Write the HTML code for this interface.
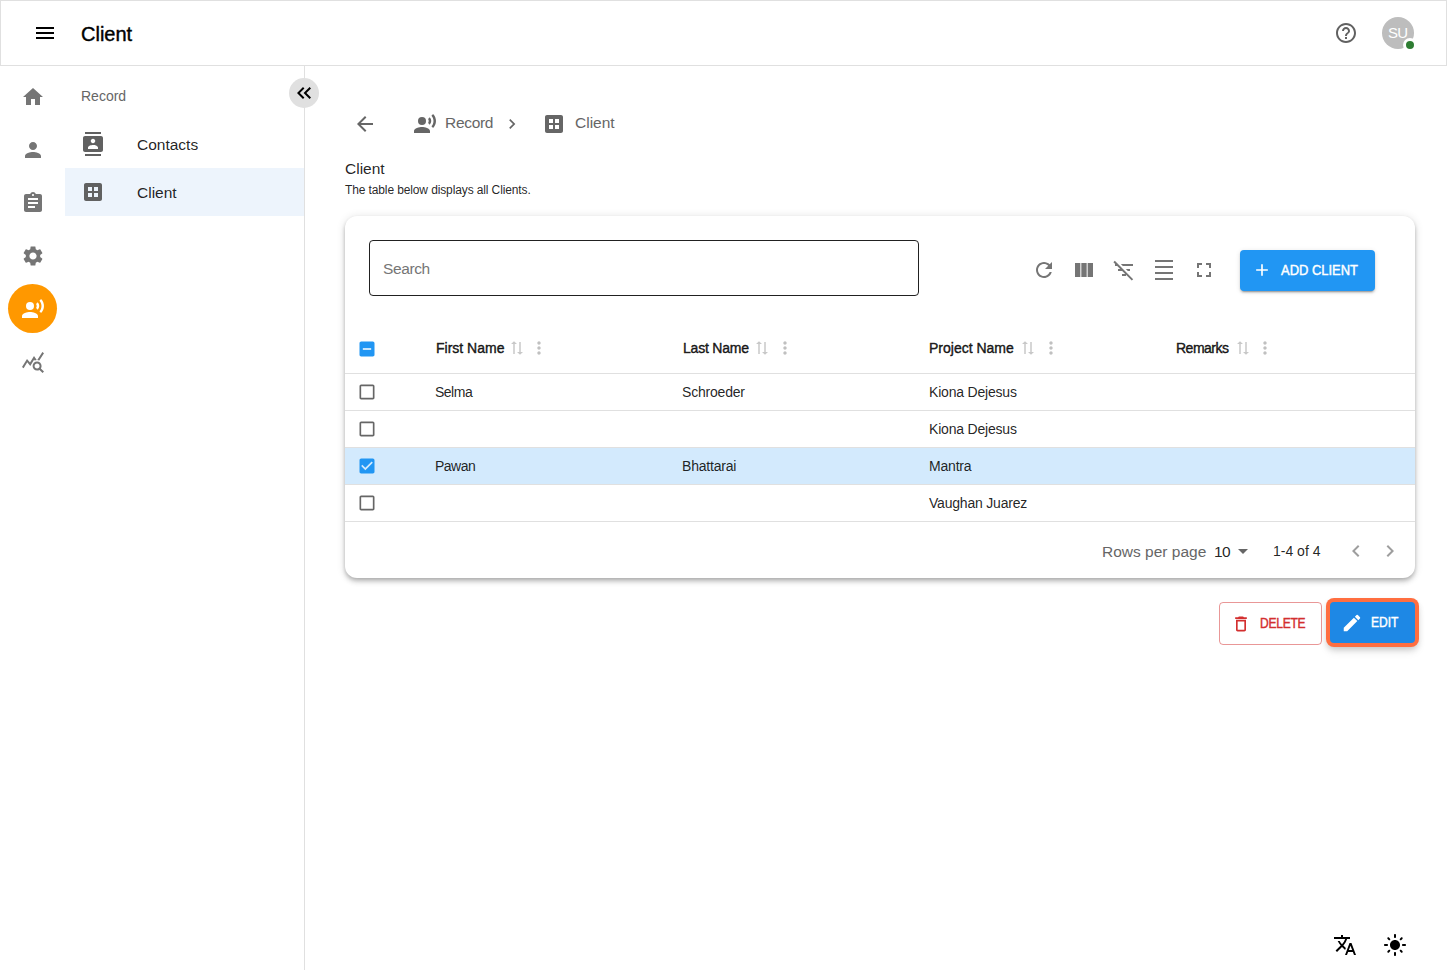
<!DOCTYPE html>
<html><head><meta charset="utf-8"><title>Client</title>
<style>
*{box-sizing:border-box;margin:0;padding:0}
html,body{width:1447px;height:970px;overflow:hidden;background:#fff;font-family:"Liberation Sans",sans-serif;color:rgba(0,0,0,0.87)}
.a{position:absolute}
.t{position:absolute;white-space:nowrap;line-height:1}
.sb{font-weight:400 !important;-webkit-text-stroke:0.45px currentColor}
svg.i{position:absolute;width:24px;height:24px;fill:currentColor}
</style></head><body>

<!-- HEADER -->
<div class="a" style="left:0;top:0;width:1447px;height:66px;border:1px solid #e0e0e0"></div>
<svg class="i" viewBox="0 0 24 24" style="left:33px;top:21px;color:#000"><path d="M3 18h18v-2H3zm0-5h18v-2H3zm0-7v2h18V6z"/></svg>
<div class="t sb" style="left:81px;top:24px;font-size:20px;color:#000;-webkit-text-stroke:0.4px #000;letter-spacing:0px">Client</div>
<svg class="i" viewBox="0 0 24 24" style="left:1334px;top:21px;color:#616161"><path d="M11 18h2v-2h-2zm1-16C6.48 2 2 6.48 2 12s4.48 10 10 10 10-4.48 10-10S17.52 2 12 2m0 18c-4.41 0-8-3.59-8-8s3.59-8 8-8 8 3.59 8 8-3.59 8-8 8m0-14c-2.21 0-4 1.790-4 4h2c0-1.1.9-2 2-2s2 .9 2 2c0 2-3 1.75-3 5h2c0-2.25 3-2.5 3-5 0-2.21-1.79-4-4-4"/></svg>
<div class="a" style="left:1382px;top:17px;width:32px;height:32px;border-radius:50%;background:#bdbdbd"></div>
<div class="t" style="left:1388px;top:25px;font-size:15px;color:#fff;letter-spacing:-0.8px">SU</div>
<div class="a" style="left:1403px;top:38px;width:14px;height:14px;border-radius:50%;background:#2e7d32;border:3px solid #fff"></div>

<!-- ICON RAIL -->
<svg class="i" viewBox="0 0 24 24" style="left:21px;top:85px;color:#757575"><path d="M10 20v-6h4v6h5v-8h3L12 3 2 12h3v8z"/></svg>
<svg class="i" viewBox="0 0 24 24" style="left:21px;top:138px;color:#757575"><path d="M12 12c2.21 0 4-1.79 4-4s-1.79-4-4-4-4 1.79-4 4 1.79 4 4 4m0 2c-2.67 0-8 1.34-8 4v2h16v-2c0-2.66-5.33-4-8-4"/></svg>
<svg class="i" viewBox="0 0 24 24" style="left:21px;top:191px;color:#757575"><path d="M19 3h-4.18C14.4 1.840 13.3 1 12 1c-1.3 0-2.4.84-2.82 2H5c-1.1 0-2 .9-2 2v14c0 1.1.9 2 2 2h14c1.1 0 2-.9 2-2V5c0-1.1-.9-2-2-2m-7 0c.55 0 1 .45 1 1s-.45 1-1 1-1-.45-1-1 .45-1 1-1m2 14H7v-2h7zm3-4H7v-2h10zm0-4H7V7h10z"/></svg>
<svg class="i" viewBox="0 0 24 24" style="left:21px;top:244px;color:#757575"><path d="M19.14 12.94c.04-.3.06-.61.06-.94 0-.32-.02-.64-.07-.94l2.03-1.58c.18-.14.23-.41.12-.61l-1.92-3.32c-.12-.22-.37-.29-.59-.22l-2.39.96c-.5-.38-1.03-.7-1.62-.94l-.36-2.54c-.04-.24-.24-.41-.48-.41h-3.84c-.24 0-.43.17-.47.41l-.36 2.54c-.59.24-1.13.57-1.62.94l-2.39-.96c-.22-.08-.47 0-.59.22L2.740 8.87c-.12.21-.08.47.12.61l2.03 1.58c-.05.3-.09.63-.09.94s.02.64.07.94l-2.03 1.58c-.18.14-.23.41-.12.61l1.92 3.32c.12.22.37.29.59.22l2.39-.96c.5.38 1.03.7 1.62.94l.36 2.54c.05.24.24.41.48.41h3.84c.24 0 .44-.17.47-.41l.36-2.54c.59-.24 1.13-.56 1.62-.94l2.39.96c.22.08.47 0 .59-.22l1.92-3.32c.12-.22.07-.47-.12-.61zM12 15.6c-1.98 0-3.6-1.62-3.6-3.6s1.62-3.6 3.6-3.6 3.6 1.62 3.6 3.6-1.62 3.6-3.6 3.6"/></svg>
<div class="a" style="left:8px;top:284px;width:49px;height:49px;border-radius:50%;background:#ff9800"></div>
<svg class="i" viewBox="0 0 24 24" style="left:21px;top:297px;color:#fff"><circle cx="9" cy="9" r="4"/><path d="M9 15c-2.67 0-8 1.34-8 4v2h16v-2c0-2.66-5.33-4-8-4m7.76-9.64-1.68 1.69c.84 1.18.84 2.71 0 3.89l1.68 1.69c2.02-2.02 2.02-5.07 0-7.27M20.07 2l-1.63 1.63c2.77 3.02 2.77 7.56 0 10.74L20.07 16c3.9-3.89 3.91-9.95 0-14"/></svg>
<svg class="i" viewBox="0 0 24 24" style="left:21px;top:350px;color:#757575"><path d="M19.88 18.47c.44-.7.7-1.51.7-2.39 0-2.49-2.01-4.5-4.5-4.5s-4.5 2.01-4.5 4.5 2.01 4.5 4.49 4.5c.88 0 1.7-.26 2.39-.7L21.58 23 23 21.58zm-3.8.11c-1.38 0-2.5-1.12-2.5-2.5s1.12-2.5 2.5-2.5 2.5 1.12 2.5 2.5-1.12 2.5-2.5 2.5m-.36-8.5c-.74.02-1.45.18-2.1.45l-.55-.83-3.8 6.18-3.01-3.52-3.63 5.81L1 17l5-8 3 3.5L13 6zm2.59.5c-.64-.28-1.33-.45-2.05-.49L21.38 2 23 3.18z"/></svg>

<!-- SIDEBAR PANEL -->
<div class="a" style="left:304px;top:66px;width:1px;height:904px;background:#e0e0e0"></div>
<div class="t" style="left:81px;top:89px;font-size:14px;color:#666">Record</div>
<div class="a" style="left:289px;top:78px;width:30px;height:30px;border-radius:50%;background:#e0e0e0"></div>
<svg class="i" viewBox="0 0 24 24" style="left:292px;top:81px;color:#000"><path d="M17.59 18 19 16.59 14.42 12 19 7.41 17.59 6l-6 6z"/><path d="M11 18l1.41-1.41L7.83 12l4.58-4.59L11 6l-6 6z"/></svg>
<svg class="i" viewBox="0 0 24 24" style="left:81px;top:132px;color:#616161"><path d="M20 0H4v2h16zM4 24h16v-2H4zM20 4H4c-1.1 0-2 .9-2 2v12c0 1.1.9 2 2 2h16c1.1 0 2-.9 2-2V6c0-1.1-.9-2-2-2m-8 2.75c1.24 0 2.25 1.01 2.25 2.25s-1.01 2.25-2.25 2.25S9.75 10.24 9.75 9 10.76 6.75 12 6.75M17 17H7v-1.5c0-1.67 3.33-2.5 5-2.5s5 .83 5 2.5z"/></svg>
<div class="t" style="left:137px;top:137px;font-size:15.5px;color:rgba(0,0,0,0.87)">Contacts</div>
<div class="a" style="left:65px;top:168px;width:239px;height:48px;background:#edf4fc"></div>
<svg class="i" viewBox="0 0 24 24" style="left:81px;top:180px;color:#616161"><path d="M19 3H5c-1.1 0-2 .9-2 2v14c0 1.1.9 2 2 2h14c1.1 0 2-.9 2-2V5c0-1.1-.9-2-2-2m-8 14H7v-4h4zm0-6H7V7h4zm6 6h-4v-4h4zm0-6h-4V7h4z"/></svg>
<div class="t" style="left:137px;top:185px;font-size:15.5px;color:rgba(0,0,0,0.87)">Client</div>

<!-- BREADCRUMB -->
<svg class="i" viewBox="0 0 24 24" style="left:353px;top:112px;color:#666"><path d="M20 11H7.83l5.59-5.59L12 4l-8 8 8 8 1.41-1.41L7.83 13H20z"/></svg>
<svg class="i" viewBox="0 0 24 24" style="left:413px;top:112px;color:#666"><circle cx="9" cy="9" r="4"/><path d="M9 15c-2.67 0-8 1.34-8 4v2h16v-2c0-2.66-5.33-4-8-4m7.76-9.64-1.68 1.69c.84 1.18.84 2.71 0 3.89l1.68 1.69c2.02-2.02 2.02-5.07 0-7.27M20.07 2l-1.63 1.63c2.77 3.02 2.77 7.56 0 10.74L20.07 16c3.9-3.89 3.91-9.95 0-14"/></svg>
<div class="t" style="left:445px;top:115px;font-size:15.5px;color:#666;letter-spacing:-0.3px">Record</div>
<svg class="i" viewBox="0 0 24 24" style="left:502px;top:114px;width:20px;height:20px;color:#666"><path d="M10 6 8.59 7.41 13.17 12l-4.58 4.59L10 18l6-6z"/></svg>
<svg class="i" viewBox="0 0 24 24" style="left:542px;top:112px;color:#666"><path d="M19 3H5c-1.1 0-2 .9-2 2v14c0 1.1.9 2 2 2h14c1.1 0 2-.9 2-2V5c0-1.1-.9-2-2-2m-8 14H7v-4h4zm0-6H7V7h4zm6 6h-4v-4h4zm0-6h-4V7h4z"/></svg>
<div class="t" style="left:575px;top:115px;font-size:15.5px;color:#666">Client</div>

<div class="t" style="left:345px;top:161px;font-size:15.5px;color:rgba(0,0,0,0.87)">Client</div>
<div class="t" style="left:345px;top:184px;font-size:12px;color:rgba(0,0,0,0.87);letter-spacing:-0.12px">The table below displays all Clients.</div>

<!-- CARD -->
<div class="a" style="left:345px;top:216px;width:1070px;height:362px;border-radius:12px;background:#fff;box-shadow:0 2px 4px -1px rgba(0,0,0,0.2),0 4px 5px 0 rgba(0,0,0,0.14),0 1px 10px 0 rgba(0,0,0,0.12)"></div>


<!-- SEARCH -->
<div class="a" style="left:369px;top:240px;width:550px;height:56px;border:1px solid rgba(0,0,0,0.87);border-radius:4px"></div>
<div class="t" style="left:383px;top:261px;font-size:15.5px;color:#757575;letter-spacing:-0.4px">Search</div>

<!-- TOOLBAR -->
<svg class="i" viewBox="0 0 24 24" style="left:1032px;top:258px;color:#757575"><path d="M17.65 6.35C16.2 4.9 14.21 4 12 4c-4.42 0-7.99 3.58-7.99 8s3.57 8 7.99 8c3.73 0 6.84-2.55 7.73-6h-2.08c-.82 2.33-3.04 4-5.65 4-3.31 0-6-2.69-6-6s2.690-6 6-6c1.66 0 3.14.69 4.22 1.78L13 11h7V4z"/></svg>
<svg class="i" viewBox="0 0 24 24" style="left:1072px;top:258px;color:#757575"><path d="M14.67 5v14H9.33V5zm1 14H21V5h-5.33zm-7.34 0V5H3v14z"/></svg>
<svg class="i" viewBox="0 0 24 24" style="left:1112px;top:258px;color:#757575"><path d="M10.83 8H21V6H8.83l2 2zm5 5H18v-2h-4.17l2 2zM14 16.83V18h-4v-2h3.17l-3-3H6v-2h2.17l-3-3H3V6h.17L1.39 4.22 2.8 2.81l18.38 18.38-1.41 1.41L14 16.83z"/></svg>
<svg class="i" viewBox="0 0 24 24" style="left:1152px;top:258px;color:#757575"><path d="M3 2h18v2H3zm0 18h18v2H3zm0-6h18v2H3zm0-6h18v2H3z"/></svg>
<svg class="i" viewBox="0 0 24 24" style="left:1192px;top:258px;color:#757575"><path d="M7 14H5v5h5v-2H7zm-2-4h2V7h3V5H5zm12 7h-3v2h5v-5h-2zM14 5v2h3v3h2V5z"/></svg>
<div class="a" style="left:1240px;top:250px;width:135px;height:41px;border-radius:4px;background:#2196f3;box-shadow:0 3px 1px -2px rgba(0,0,0,0.2),0 2px 2px 0 rgba(0,0,0,0.14),0 1px 5px 0 rgba(0,0,0,0.12)"></div>
<svg class="i" viewBox="0 0 24 24" style="left:1252px;top:260px;width:20px;height:20px;color:#fff"><path d="M19 13h-6v6h-2v-6H5v-2h6V5h2v6h6z"/></svg>
<div class="t sb" style="left:1281px;top:263px;font-size:14px;color:#fff;letter-spacing:0px;transform:scaleX(0.925);transform-origin:0 0">ADD CLIENT</div>

<!-- TABLE HEADER -->
<svg class="i" viewBox="0 0 24 24" style="left:357px;top:339px;width:20px;height:20px;color:#2196f3"><path d="M19 3H5c-1.1 0-2 .9-2 2v14c0 1.1.9 2 2 2h14c1.1 0 2-.9 2-2V5c0-1.1-.9-2-2-2m-2 10H7v-2h10z"/></svg>
<div class="t sb" style="left:436px;top:341px;font-size:14px;font-weight:700;color:rgba(0,0,0,0.87);letter-spacing:0px">First Name</div>
<svg class="i sort" viewBox="0 0 24 24" style="left:508px;top:339px;width:18px;height:18px;color:#c8c8c8;transform:rotate(-90deg) scaleX(0.9)"><path d="m18 12 4-4-4-4v3H3v2h15zM6 12l-4 4 4 4v-3h15v-2H6z"/></svg>
<svg class="i" viewBox="0 0 24 24" style="left:529px;top:338px;width:20px;height:20px;color:#c0c0c0"><path d="M12 8c1.1 0 2-.9 2-2s-.9-2-2-2-2 .9-2 2 .9 2 2 2m0 2c-1.1 0-2 .9-2 2s.9 2 2 2 2-.9 2-2-.9-2-2-2m0 6c-1.1 0-2 .9-2 2s.9 2 2 2 2-.9 2-2-.9-2-2-2"/></svg>
<div class="t sb" style="left:683px;top:341px;font-size:14px;font-weight:700;color:rgba(0,0,0,0.87);letter-spacing:-0.2px">Last Name</div>
<svg class="i sort" viewBox="0 0 24 24" style="left:753px;top:339px;width:18px;height:18px;color:#c8c8c8;transform:rotate(-90deg) scaleX(0.9)"><path d="m18 12 4-4-4-4v3H3v2h15zM6 12l-4 4 4 4v-3h15v-2H6z"/></svg>
<svg class="i" viewBox="0 0 24 24" style="left:775px;top:338px;width:20px;height:20px;color:#c0c0c0"><path d="M12 8c1.1 0 2-.9 2-2s-.9-2-2-2-2 .9-2 2 .9 2 2 2m0 2c-1.1 0-2 .9-2 2s.9 2 2 2 2-.9 2-2-.9-2-2-2m0 6c-1.1 0-2 .9-2 2s.9 2 2 2 2-.9 2-2-.9-2-2-2"/></svg>
<div class="t sb" style="left:929px;top:341px;font-size:14px;font-weight:700;color:rgba(0,0,0,0.87);letter-spacing:0px">Project Name</div>
<svg class="i sort" viewBox="0 0 24 24" style="left:1019px;top:339px;width:18px;height:18px;color:#c8c8c8;transform:rotate(-90deg) scaleX(0.9)"><path d="m18 12 4-4-4-4v3H3v2h15zM6 12l-4 4 4 4v-3h15v-2H6z"/></svg>
<svg class="i" viewBox="0 0 24 24" style="left:1041px;top:338px;width:20px;height:20px;color:#c0c0c0"><path d="M12 8c1.1 0 2-.9 2-2s-.9-2-2-2-2 .9-2 2 .9 2 2 2m0 2c-1.1 0-2 .9-2 2s.9 2 2 2 2-.9 2-2-.9-2-2-2m0 6c-1.1 0-2 .9-2 2s.9 2 2 2 2-.9 2-2-.9-2-2-2"/></svg>
<div class="t sb" style="left:1176px;top:341px;font-size:14px;font-weight:700;color:rgba(0,0,0,0.87);letter-spacing:-0.5px">Remarks</div>
<svg class="i sort" viewBox="0 0 24 24" style="left:1234px;top:339px;width:18px;height:18px;color:#c8c8c8;transform:rotate(-90deg) scaleX(0.9)"><path d="m18 12 4-4-4-4v3H3v2h15zM6 12l-4 4 4 4v-3h15v-2H6z"/></svg>
<svg class="i" viewBox="0 0 24 24" style="left:1255px;top:338px;width:20px;height:20px;color:#c0c0c0"><path d="M12 8c1.1 0 2-.9 2-2s-.9-2-2-2-2 .9-2 2 .9 2 2 2m0 2c-1.1 0-2 .9-2 2s.9 2 2 2 2-.9 2-2-.9-2-2-2m0 6c-1.1 0-2 .9-2 2s.9 2 2 2 2-.9 2-2-.9-2-2-2"/></svg>

<div class="a" style="left:345px;top:373px;width:1070px;height:1px;background:#e0e0e0"></div>
<div class="a" style="left:345px;top:410px;width:1070px;height:1px;background:#e0e0e0"></div>
<div class="a" style="left:345px;top:447px;width:1070px;height:1px;background:#e0e0e0"></div>
<div class="a" style="left:345px;top:448px;width:1070px;height:36px;background:#d3eafd"></div>
<div class="a" style="left:345px;top:484px;width:1070px;height:1px;background:#e0e0e0"></div>
<div class="a" style="left:345px;top:521px;width:1070px;height:1px;background:#e0e0e0"></div>
<svg class="i" viewBox="0 0 24 24" style="left:357px;top:382px;width:20px;height:20px;color:#666"><path d="M19 5v14H5V5zm0-2H5c-1.1 0-2 .9-2 2v14c0 1.1.9 2 2 2h14c1.1 0 2-.9 2-2V5c0-1.1-.9-2-2-2"/></svg>
<div class="t" style="left:435px;top:385px;font-size:14px;color:rgba(0,0,0,0.87);letter-spacing:-0.5px">Selma</div>
<div class="t" style="left:682px;top:385px;font-size:14px;color:rgba(0,0,0,0.87);letter-spacing:-0.2px">Schroeder</div>
<div class="t" style="left:929px;top:385px;font-size:14px;color:rgba(0,0,0,0.87);letter-spacing:-0.2px">Kiona Dejesus</div>
<svg class="i" viewBox="0 0 24 24" style="left:357px;top:419px;width:20px;height:20px;color:#666"><path d="M19 5v14H5V5zm0-2H5c-1.1 0-2 .9-2 2v14c0 1.1.9 2 2 2h14c1.1 0 2-.9 2-2V5c0-1.1-.9-2-2-2"/></svg>
<div class="t" style="left:929px;top:422px;font-size:14px;color:rgba(0,0,0,0.87);letter-spacing:-0.2px">Kiona Dejesus</div>
<svg class="i" viewBox="0 0 24 24" style="left:357px;top:456px;width:20px;height:20px;color:#2196f3"><path d="M19 3H5c-1.11 0-2 .9-2 2v14c0 1.1.89 2 2 2h14c1.11 0 2-.9 2-2V5c0-1.1-.89-2-2-2m-9 14-5-5 1.41-1.41L10 14.17l7.59-7.59L19 8z"/></svg>
<div class="t" style="left:435px;top:459px;font-size:14px;color:rgba(0,0,0,0.87);letter-spacing:-0.5px">Pawan</div>
<div class="t" style="left:682px;top:459px;font-size:14px;color:rgba(0,0,0,0.87);letter-spacing:-0.2px">Bhattarai</div>
<div class="t" style="left:929px;top:459px;font-size:14px;color:rgba(0,0,0,0.87);letter-spacing:-0.2px">Mantra</div>
<svg class="i" viewBox="0 0 24 24" style="left:357px;top:493px;width:20px;height:20px;color:#666"><path d="M19 5v14H5V5zm0-2H5c-1.1 0-2 .9-2 2v14c0 1.1.9 2 2 2h14c1.1 0 2-.9 2-2V5c0-1.1-.9-2-2-2"/></svg>
<div class="t" style="left:929px;top:496px;font-size:14px;color:rgba(0,0,0,0.87);letter-spacing:-0.2px">Vaughan Juarez</div>


<!-- PAGINATION -->
<div class="t" style="left:1102px;top:544px;font-size:15.5px;color:#666">Rows per page</div>
<div class="t" style="left:1214px;top:544px;font-size:15.5px;color:rgba(0,0,0,0.87);letter-spacing:-0.5px">10</div>
<svg class="i" viewBox="0 0 24 24" style="left:1231px;top:539px;color:#666"><path d="m7 10 5 5 5-5z"/></svg>
<div class="t" style="left:1273px;top:544px;font-size:14px;color:rgba(0,0,0,0.87)">1-4 of 4</div>
<svg class="i" viewBox="0 0 24 24" style="left:1344px;top:539px;color:#9e9e9e"><path d="M15.41 7.41 14 6l-6 6 6 6 1.41-1.41L10.83 12z"/></svg>
<svg class="i" viewBox="0 0 24 24" style="left:1378px;top:539px;color:#9e9e9e"><path d="M10 6 8.59 7.41 13.17 12l-4.58 4.59L10 18l6-6z"/></svg>

<!-- ACTION BUTTONS -->
<div class="a" style="left:1219px;top:602px;width:103px;height:43px;border:1px solid rgba(211,47,47,0.5);border-radius:4px"></div>
<svg class="i" viewBox="0 0 24 24" style="left:1231px;top:614px;width:20px;height:20px;color:#d32f2f"><path d="M6 19c0 1.1.9 2 2 2h8c1.1 0 2-.9 2-2V7H6zM8 9h8v10H8zm7.5-5-1-1h-5l-1 1H5v2h14V4z"/></svg>
<div class="t sb" style="left:1260px;top:616px;font-size:14px;color:#d32f2f;letter-spacing:-0.3px;transform:scaleX(0.86);transform-origin:0 0">DELETE</div>
<div class="a" style="left:1330px;top:602px;width:85px;height:41px;border-radius:4px;background:#1e88e5;box-shadow:0 0 0 4px #ff6e40,0 3px 6px 3px rgba(0,0,0,0.16),0 6px 10px 2px rgba(0,0,0,0.10)"></div>
<svg class="i" viewBox="0 0 24 24" style="left:1341px;top:612px;width:22px;height:22px;color:#fff"><path d="M3 17.25V21h3.75L17.81 9.94l-3.75-3.750zM20.71 7.04c.39-.39.39-1.020 0-1.41l-2.34-2.34a.996.996 0 0 0-1.41 0l-1.83 1.83 3.75 3.75z"/></svg>
<div class="t sb" style="left:1371px;top:615px;font-size:14px;color:#fff;letter-spacing:0px;transform:scaleX(0.86);transform-origin:0 0">EDIT</div>

<!-- BOTTOM RIGHT -->
<svg class="i" viewBox="0 0 24 24" style="left:1333px;top:933px;color:#000"><path d="m12.87 15.07-2.54-2.51.03-.03c1.74-1.94 2.98-4.17 3.71-6.53H17V4h-7V2H8v2H1v1.99h11.17C11.5 7.92 10.44 9.75 9 11.35 8.07 10.32 7.3 9.19 6.69 8h-2c.73 1.63 1.73 3.17 2.98 4.56l-5.09 5.02L4 19l5-5 3.11 3.11zM18.5 10h-2L12 22h2l1.12-3h4.75L21 22h2zm-2.62 7 1.62-4.33L19.12 17z"/></svg>
<svg class="i" viewBox="0 0 24 24" style="left:1383px;top:933px;color:#000"><path d="M12 7c-2.76 0-5 2.24-5 5s2.24 5 5 5 5-2.24 5-5-2.24-5-5-5M2 13h2c.55 0 1-.45 1-1s-.45-1-1-1H2c-.55 0-1 .45-1 1s.45 1 1 1m18 0h2c.55 0 1-.45 1-1s-.45-1-1-1h-2c-.55 0-1 .45-1 1s.45 1 1 1M11 2v2c0 .55.45 1 1 1s1-.45 1-1V2c0-.55-.45-1-1-1s-1 .45-1 1m0 18v2c0 .55.45 1 1 1s1-.45 1-1v-2c0-.55-.45-1-1-1s-1 .45-1 1M5.99 4.58c-.39-.39-1.03-.39-1.41 0-.39.39-.39 1.03 0 1.41l1.06 1.06c.39.39 1.03.39 1.41 0s.39-1.03 0-1.41zm12.37 12.37c-.39-.39-1.03-.39-1.41 0-.39.39-.39 1.03 0 1.41l1.06 1.06c.39.39 1.03.39 1.41 0 .39-.39.39-1.03 0-1.41zm1.06-10.96c.39-.39.39-1.03 0-1.41-.39-.39-1.03-.39-1.41 0l-1.06 1.06c-.39.39-.39 1.03 0 1.41s1.03.39 1.41 0zM7.05 18.36c.39-.39.39-1.03 0-1.41-.39-.39-1.03-.39-1.41 0l-1.06 1.06c-.39.39-.39 1.03 0 1.41s1.03.39 1.41 0z"/></svg>

</body></html>
